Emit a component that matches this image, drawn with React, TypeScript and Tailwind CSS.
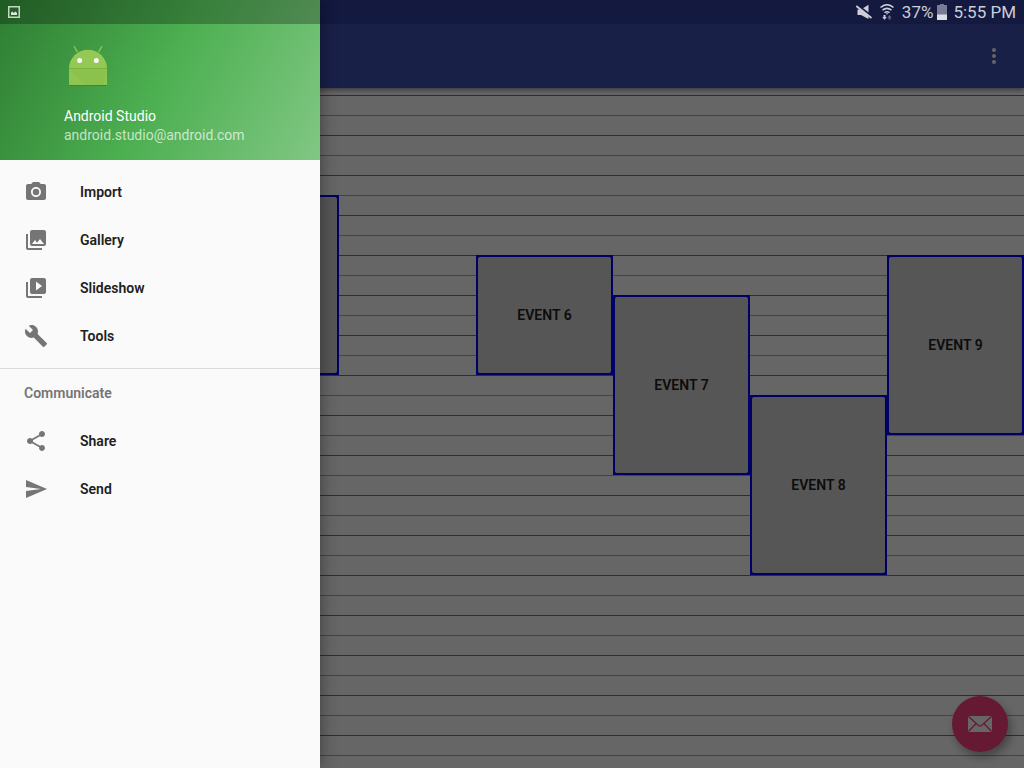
import type { ReactNode } from "react";

type NavItem = { label: string; icon: ReactNode };

function Icon({ d, children }: { d: string; children?: ReactNode }) {
  return (
    <svg viewBox="0 0 24 24" className="size-6 shrink-0 fill-[#757575]" aria-hidden="true">
      <path d={d} />
      {children}
    </svg>
  );
}

const mainItems: NavItem[] = [
  {
    label: "Import",
    icon: (
      <Icon d="M9,2L7.17,4H4c-1.1,0 -2,0.9 -2,2v12c0,1.1 0.9,2 2,2h16c1.1,0 2,-0.9 2,-2V6c0,-1.1 -0.9,-2 -2,-2h-3.17L15,2H9zM12,17c-2.76,0 -5,-2.24 -5,-5s2.24,-5 5,-5 5,2.24 5,5 -2.24,5 -5,5z">
        <circle cx="12" cy="12" r="3.2" />
      </Icon>
    ),
  },
  {
    label: "Gallery",
    icon: (
      <Icon d="M22,16V4c0,-1.1 -0.9,-2 -2,-2H8c-1.1,0 -2,0.9 -2,2v12c0,1.1 0.9,2 2,2h12c1.1,0 2,-0.9 2,-2zm-11,-4l2.03,2.71L16,11l4,5H8l3,-4zM2,6v14c0,1.1 0.9,2 2,2h14v-2H4V6H2z" />
    ),
  },
  {
    label: "Slideshow",
    icon: (
      <Icon d="M4,6H2v14c0,1.1 0.9,2 2,2h14v-2H4V6zm16,-4H8c-1.1,0 -2,0.9 -2,2v12c0,1.1 0.9,2 2,2h12c1.1,0 2,-0.9 2,-2V4c0,-1.1 -0.9,-2 -2,-2zm-8,12.5v-9l6,4.5 -6,4.5z" />
    ),
  },
  {
    label: "Tools",
    icon: (
      <Icon d="M22.7,19l-9.1,-9.1c0.9,-2.3 0.4,-5 -1.5,-6.9 -2,-2 -5,-2.4 -7.4,-1.3L9,6 6,9 1.6,4.7C0.4,7.1 0.9,10.1 2.9,12.1c1.9,1.9 4.6,2.4 6.9,1.5l9.1,9.1c0.4,0.4 1,0.4 1.4,0l2.3,-2.3c0.5,-0.4 0.5,-1.1 0.1,-1.4z" />
    ),
  },
];

const communicateItems: NavItem[] = [
  {
    label: "Share",
    icon: (
      <Icon d="M18,16.08c-0.76,0 -1.44,0.3 -1.96,0.77L8.91,12.7c0.05,-0.23 0.09,-0.46 0.09,-0.7s-0.04,-0.47 -0.09,-0.7l7.05,-4.11c0.54,0.5 1.25,0.81 2.04,0.81 1.66,0 3,-1.34 3,-3s-1.34,-3 -3,-3 -3,1.34 -3,3c0,0.24 0.04,0.47 0.09,0.7L8.04,9.81C7.5,9.31 6.79,9 6,9c-1.66,0 -3,1.34 -3,3s1.34,3 3,3c0.79,0 1.5,-0.31 2.04,-0.81l7.12,4.16c-0.05,0.21 -0.08,0.43 -0.08,0.65 0,1.61 1.31,2.92 2.92,2.92 1.61,0 2.92,-1.31 2.92,-2.92s-1.31,-2.92 -2.92,-2.92z" />
    ),
  },
  { label: "Send", icon: <Icon d="M2.01,21L23,12 2.01,3 2,10l15,2 -15,2z" /> },
];

const events = [
  { label: "", place: "col-start-3 row-start-6 row-span-9" },
  { label: "Event 6", place: "col-start-5 row-start-9 row-span-6" },
  { label: "Event 7", place: "col-start-6 row-start-11 row-span-9" },
  { label: "Event 8", place: "col-start-7 row-start-16 row-span-9" },
  { label: "Event 9", place: "col-start-8 row-start-9 row-span-9" },
];

const halfHours = Array.from({ length: 48 }, (_, i) => i);

function NavList({ items }: { items: NavItem[] }) {
  return (
    <ul>
      {items.map((item) => (
        <li key={item.label}>
          <a href="#" className="flex h-12 items-center gap-8 px-6 text-sm font-semibold text-[#212121]">
            {item.icon}
            {item.label}
          </a>
        </li>
      ))}
    </ul>
  );
}

function AndroidHead() {
  return (
    <svg viewBox="64 40 48 48" className="size-12" aria-hidden="true">
      <path d="M74 46.2L77.6 52.4M102 46.2L98.4 52.4" stroke="#8bc34a" strokeWidth="1.4" />
      <path d="M69 70a19 19.5 0 0 1 38 0v15a1 1 0 0 1-1 1H70a1 1 0 0 1-1-1z" fill="#2e7d32" opacity="0.6" />
      <path d="M69 68.5a19 18.8 0 0 1 38 0v15.5a1 1 0 0 1-1 1H70a1 1 0 0 1-1-1z" fill="#95c956" />
      <path d="M69 68.5H107V84a1 1 0 0 1-1 1H70a1 1 0 0 1-1-1z" fill="#8fc650" />
      <path d="M69 69L85 85H104L107 69z" fill="#7cb342" opacity="0.2" />
      <path d="M69 68.5H107" stroke="#79a840" strokeWidth="1" opacity="0.7" />
      <circle cx="79.6" cy="60.6" r="2.5" fill="#fafafa" />
      <circle cx="96.3" cy="60.6" r="2.5" fill="#fafafa" />
    </svg>
  );
}

function StatusBar() {
  return (
    <div className="pointer-events-none absolute inset-x-0 top-0 z-40 flex h-6 items-center justify-between px-2 text-[17px] text-[#ccced8]">
      <svg viewBox="0 0 12 12" className="size-3" aria-hidden="true">
        <rect x="0.75" y="0.75" width="10.5" height="10.5" fill="none" stroke="#c4d6c5" strokeWidth="1.5" />
        <path d="M3 9V6.5L4.5 5.500 5.500 7 7.500 5.500 9 7V9z" fill="#dce8dc" />
      </svg>
      <div className="flex items-center">
        <svg viewBox="0 0 16 16" className="mr-2 size-4" aria-hidden="true">
          <path d="M1.500 5.500H5L12.500 0.800V15L5 11H1.500z" fill="#ccced8" />
          <path d="M2 1.500L16 12.200" stroke="#141940" strokeWidth="2" />
          <path d="M0.300 2L15.500 14" stroke="#ccced8" strokeWidth="1.800" />
        </svg>
        <svg viewBox="0 0 14 16" className="mr-2 h-4 w-[14px]" aria-hidden="true">
          <path d="M0.500 3.500Q7-2 13.500 3.500M2.500 6.200Q7 2.500 11.500 6.200M4.500 8.800Q7 6.600 9.500 8.800" fill="none" stroke="#ccced8" strokeWidth="1.500" />
          <path d="M5.800 9.200h2.400L7 10.700z" fill="#ccced8" />
          <path d="M3.500 11h2v2.300h1.300L4.500 15.800 2.200 13.300h1.300z" fill="#ccced8" />
          <path d="M8.500 15.500v-2H7.400L9.500 11l2.100 2.500h-1.100v2z" fill="#62668a" />
        </svg>
        <span className="pt-0.5">37%</span>
        <svg viewBox="0 0 10 16" className="mr-1.5 ml-1 h-4 w-[10px]" aria-hidden="true">
          <path d="M3 0h4v1h3v15H0V1h3z" fill="#777b93" />
          <path d="M0 10.500h10V16H0z" fill="#dddee4" />
        </svg>
        <span className="pt-0.5">5:55 PM</span>
      </div>
    </div>
  );
}

export default function App() {
  return (
    <div className="relative flex min-h-screen flex-col overflow-hidden bg-white font-[Roboto,sans-serif]">
      <header className="relative z-10 bg-[#3f51b5] shadow-[0_2px_5px_rgba(0,0,0,0.45)]">
        <div className="h-6 bg-[#303f9f]" />
        <div className="flex h-16 items-center justify-end pr-[18px]">
          <button aria-label="More options" className="flex size-6 items-center justify-center">
            <svg viewBox="0 0 24 24" className="size-6 fill-white" aria-hidden="true">
              <circle cx="12" cy="6" r="2" />
              <circle cx="12" cy="12" r="2" />
              <circle cx="12" cy="18" r="2" />
            </svg>
          </button>
        </div>
      </header>

      <main className="relative flex-1 pt-[7px]">
        <div className="absolute inset-0 overflow-hidden pt-[7px]" aria-hidden="true">
          {halfHours.map((slot) => (
            <div key={slot} className="h-5 border-t border-[#737373] even:border-[#a8a8a8]" />
          ))}
        </div>
        <div className="relative grid auto-rows-[20px] grid-cols-[65px_repeat(7,minmax(0,1fr))]">
          {events.map((event) => (
            <button
              key={event.place}
              aria-label={event.label || "Event"}
              className={`${event.place} border-2 border-[#0000ff] bg-[#0000ff]`}
            >
              <span className="flex h-full items-center justify-center rounded-[2px] bg-[#d6d7d7] text-sm font-semibold text-[#222222] uppercase">
                {event.label}
              </span>
            </button>
          ))}
        </div>
      </main>

      <button
        aria-label="Compose message"
        className="absolute right-4 bottom-4 flex size-14 items-center justify-center rounded-full bg-[#ff4081] shadow-[3px_5px_10px_rgba(0,0,0,0.35)]"
      >
        <svg viewBox="0 0 24 16" className="h-4 w-6" aria-hidden="true">
          <rect width="24" height="16" rx="1.5" fill="#ffffff" />
          <path d="M0.500 0.500L10.500 9.500Q12 10.700 13.500 9.500L23.500 0.500M0.500 15.500L8 7.500M23.500 15.500L16 7.500" fill="none" stroke="#ff4081" strokeWidth="1.3" />
        </svg>
      </button>

      <div className="absolute inset-0 z-20 bg-black/60" />

      <aside className="absolute inset-y-0 left-0 z-30 w-80 bg-[#fafafa] shadow-[0_0_16px_rgba(0,0,0,0.4)]">
        <div className="flex h-40 flex-col justify-between bg-[linear-gradient(117deg,#2e7d32,#4caf50_50%,#81c784)] pt-10 pb-[15px] pl-16 text-sm leading-[19px]">
          <AndroidHead />
          <div>
            <p className="text-white">Android Studio</p>
            <p className="text-white/70">android.studio@android.com</p>
          </div>
        </div>
        <nav className="pt-2">
          <NavList items={mainItems} />
          <div className="mt-2 border-t border-[#dadada]">
            <h2 className="flex h-12 items-center px-6 text-sm font-semibold text-[#757575]">Communicate</h2>
            <NavList items={communicateItems} />
          </div>
        </nav>
        <div className="absolute inset-x-0 top-0 h-6 bg-black/27" />
      </aside>

      <StatusBar />
    </div>
  );
}
